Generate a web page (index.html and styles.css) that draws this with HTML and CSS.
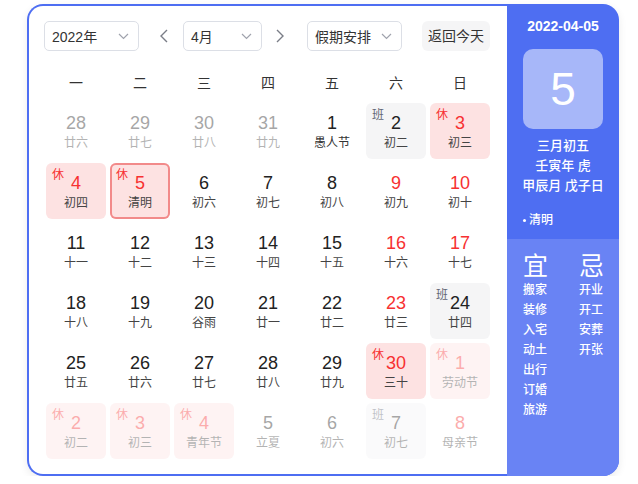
FILE: index.html
```html
<!DOCTYPE html>
<html lang="zh-CN">
<head>
<meta charset="utf-8">
<title>日历</title>
<link rel="stylesheet" href="styles.css">
</head>
<body>
<div class="wrap">
  <section class="main">
    <div class="toolbar">
      <div class="select sel-year"><span>2022年</span><svg class="chev" viewBox="0 0 11 7"><path d="M1 1l4.5 4.5L10 1"/></svg></div>
      <div class="arrow arrow-prev"><svg viewBox="0 0 8 14"><path d="M7 1L1 7l6 6"/></svg></div>
      <div class="select sel-month"><span>4月</span><svg class="chev" viewBox="0 0 11 7"><path d="M1 1l4.5 4.5L10 1"/></svg></div>
      <div class="arrow arrow-next"><svg viewBox="0 0 8 14"><path d="M1 1l6 6-6 6"/></svg></div>
      <div class="select sel-hol"><span>假期安排</span><svg class="chev" viewBox="0 0 11 7"><path d="M1 1l4.5 4.5L10 1"/></svg></div>
      <div class="today-btn">返回今天</div>
    </div>
    <div class="week">
      <div>一</div><div>二</div><div>三</div><div>四</div><div>五</div><div>六</div><div>日</div>
    </div>
    <div class="grid">
      <div class="cell other"><span class="num">28</span><span class="lun">廿六</span></div>
      <div class="cell other"><span class="num">29</span><span class="lun">廿七</span></div>
      <div class="cell other"><span class="num">30</span><span class="lun">廿八</span></div>
      <div class="cell other"><span class="num">31</span><span class="lun">廿九</span></div>
      <div class="cell"><span class="num">1</span><span class="lun fest">愚人节</span></div>
      <div class="cell work"><span class="tag">班</span><span class="num">2</span><span class="lun">初二</span></div>
      <div class="cell hol"><span class="tag">休</span><span class="num">3</span><span class="lun">初三</span></div>

      <div class="cell hol"><span class="tag">休</span><span class="num">4</span><span class="lun">初四</span></div>
      <div class="cell hol sel"><span class="tag">休</span><span class="num">5</span><span class="lun">清明</span></div>
      <div class="cell"><span class="num">6</span><span class="lun">初六</span></div>
      <div class="cell"><span class="num">7</span><span class="lun">初七</span></div>
      <div class="cell"><span class="num">8</span><span class="lun">初八</span></div>
      <div class="cell wkend"><span class="num">9</span><span class="lun">初九</span></div>
      <div class="cell wkend"><span class="num">10</span><span class="lun">初十</span></div>

      <div class="cell"><span class="num">11</span><span class="lun">十一</span></div>
      <div class="cell"><span class="num">12</span><span class="lun">十二</span></div>
      <div class="cell"><span class="num">13</span><span class="lun">十三</span></div>
      <div class="cell"><span class="num">14</span><span class="lun">十四</span></div>
      <div class="cell"><span class="num">15</span><span class="lun">十五</span></div>
      <div class="cell wkend"><span class="num">16</span><span class="lun">十六</span></div>
      <div class="cell wkend"><span class="num">17</span><span class="lun">十七</span></div>

      <div class="cell"><span class="num">18</span><span class="lun">十八</span></div>
      <div class="cell"><span class="num">19</span><span class="lun">十九</span></div>
      <div class="cell"><span class="num">20</span><span class="lun">谷雨</span></div>
      <div class="cell"><span class="num">21</span><span class="lun">廿一</span></div>
      <div class="cell"><span class="num">22</span><span class="lun">廿二</span></div>
      <div class="cell wkend"><span class="num">23</span><span class="lun">廿三</span></div>
      <div class="cell work"><span class="tag">班</span><span class="num">24</span><span class="lun">廿四</span></div>

      <div class="cell"><span class="num">25</span><span class="lun">廿五</span></div>
      <div class="cell"><span class="num">26</span><span class="lun">廿六</span></div>
      <div class="cell"><span class="num">27</span><span class="lun">廿七</span></div>
      <div class="cell"><span class="num">28</span><span class="lun">廿八</span></div>
      <div class="cell"><span class="num">29</span><span class="lun">廿九</span></div>
      <div class="cell hol"><span class="tag">休</span><span class="num">30</span><span class="lun">三十</span></div>
      <div class="cell hol other"><span class="tag">休</span><span class="num">1</span><span class="lun">劳动节</span></div>

      <div class="cell hol other"><span class="tag">休</span><span class="num">2</span><span class="lun">初二</span></div>
      <div class="cell hol other"><span class="tag">休</span><span class="num">3</span><span class="lun">初三</span></div>
      <div class="cell hol other"><span class="tag">休</span><span class="num">4</span><span class="lun">青年节</span></div>
      <div class="cell other"><span class="num">5</span><span class="lun">立夏</span></div>
      <div class="cell other"><span class="num">6</span><span class="lun">初六</span></div>
      <div class="cell work other"><span class="tag">班</span><span class="num">7</span><span class="lun">初七</span></div>
      <div class="cell wkend other"><span class="num">8</span><span class="lun">母亲节</span></div>
    </div>
  </section>
  <aside class="side">
    <div class="side-top">
      <div class="s-date">2022-04-05</div>
      <div class="s-day">5</div>
      <div class="s-lunar">三月初五</div>
      <div class="s-lunar">壬寅年 虎</div>
      <div class="s-lunar">甲辰月 戊子日</div>
      <div class="s-term"><i class="dot"></i>清明</div>
    </div>
    <div class="side-bot">
      <div class="col col-yi">
        <div class="big">宜</div>
        <div class="it">搬家</div>
        <div class="it">装修</div>
        <div class="it">入宅</div>
        <div class="it">动土</div>
        <div class="it">出行</div>
        <div class="it">订婚</div>
        <div class="it">旅游</div>
      </div>
      <div class="col col-ji">
        <div class="big">忌</div>
        <div class="it">开业</div>
        <div class="it">开工</div>
        <div class="it">安葬</div>
        <div class="it">开张</div>
      </div>
    </div>
  </aside>
</div>
</body>
</html>
```

FILE: styles.css
```css
* { box-sizing: border-box; }
html, body { margin: 0; padding: 0; background: #fff; }
body {
  font-family: "Liberation Sans", "Noto Sans CJK SC", sans-serif;
  color: #222;
}
.wrap {
  display: flex;
  width: 592px;
  height: 472px;
  margin: 4px 0 0 27px;
  border-radius: 16px;
  box-shadow: 0 3px 8px rgba(0, 0, 0, 0.08);
}
.main {
  width: 480px;
  height: 472px;
  border: 2px solid #4e6ef2;
  border-right: none;
  border-radius: 16px 0 0 16px;
  padding: 15px 17px 15px 17px;
  background: #fff;
}
.toolbar {
  display: flex;
  align-items: center;
  height: 30px;
  margin-left: -2px;
}
.select {
  display: flex;
  align-items: center;
  justify-content: space-between;
  height: 30px;
  border: 1px solid #dcdfe6;
  border-radius: 5px;
  padding: 0 9px 0 7px;
  font-size: 14px;
  color: #333;
}
.sel-year { width: 95px; }
.sel-month { width: 79px; }
.sel-hol { width: 95px; }
.chev { width: 11px; height: 7px; }
.chev path { fill: none; stroke: #a0a3ad; stroke-width: 1.2; }
.arrow { display: flex; align-items: center; justify-content: center; width: 16px; height: 30px; }
.arrow svg { width: 8px; height: 14px; }
.arrow path { fill: none; stroke: #7a7d87; stroke-width: 1.4; }
.arrow-prev { margin: 0 11px 0 17px; }
.arrow-next { margin: 0 19px 0 10px; }
.today-btn {
  margin-left: auto;
  width: 68px;
  height: 30px;
  line-height: 30px;
  text-align: center;
  background: #f5f5f6;
  border-radius: 6px;
  font-size: 14px;
  color: #333;
}
.week {
  display: grid;
  grid-template-columns: repeat(7, 60px);
  column-gap: 4px;
  margin-top: 16px;
  height: 32px;
  line-height: 32px;
  text-align: center;
  font-size: 14px;
  color: #333;
}
.grid {
  display: grid;
  grid-template-columns: repeat(7, 60px);
  grid-auto-rows: 56px;
  gap: 4px;
  margin-top: 4px;
}
.cell {
  position: relative;
  display: flex;
  flex-direction: column;
  align-items: center;
  padding-top: 10px;
  border-radius: 6px;
}
.num { font-size: 18px; line-height: 20px; color: #222; }
.lun { font-size: 12px; line-height: 20px; color: #444; }
.lun.fest { color: #333; }
.tag {
  position: absolute;
  left: 6px;
  top: 5px;
  font-size: 12px;
  line-height: 14px;
}
.hol { background: #fde2e2; }
.hol .num { color: #f73131; }
.hol .tag { color: #f73131; }
.work { background: #f5f5f6; }
.work .tag { color: #626675; }
.wkend .num { color: #f73131; }
.sel { box-shadow: inset 0 0 0 2px #f28a8a; }
.other { opacity: 0.4; }

.side {
  width: 112px;
  height: 472px;
  border-radius: 0 16px 16px 0;
  background: #4e6ef2;
  color: #fff;
  overflow: hidden;
  display: flex;
  flex-direction: column;
}
.side-top {
  height: 235px;
  padding-top: 12px;
  text-align: center;
}
.s-date { font-size: 14px; font-weight: bold; line-height: 20px; }
.s-day {
  width: 80px;
  height: 80px;
  margin: 13px auto 7px;
  border-radius: 10px;
  background: rgba(255, 255, 255, 0.5);
  font-size: 46px;
  line-height: 80px;
}
.s-lunar { font-size: 13px; line-height: 20px; font-weight: 500; }
.s-term {
  display: flex;
  align-items: center;
  margin-top: 14px;
  padding-left: 16px;
  font-size: 12px;
  line-height: 20px;
  font-weight: 500;
}
.dot {
  width: 3px;
  height: 3px;
  border-radius: 50%;
  background: #fff;
  margin-right: 3px;
}
.side-bot {
  flex: 1;
  display: flex;
  padding: 13px 0 0 16px;
  background: #6983f4;
}
.col { flex: none; }
.col-yi { width: 56px; }
.col-ji { width: 40px; }
.big { font-size: 25px; line-height: 28px; }
.it { font-size: 12px; line-height: 20px; font-weight: 500; }
```
